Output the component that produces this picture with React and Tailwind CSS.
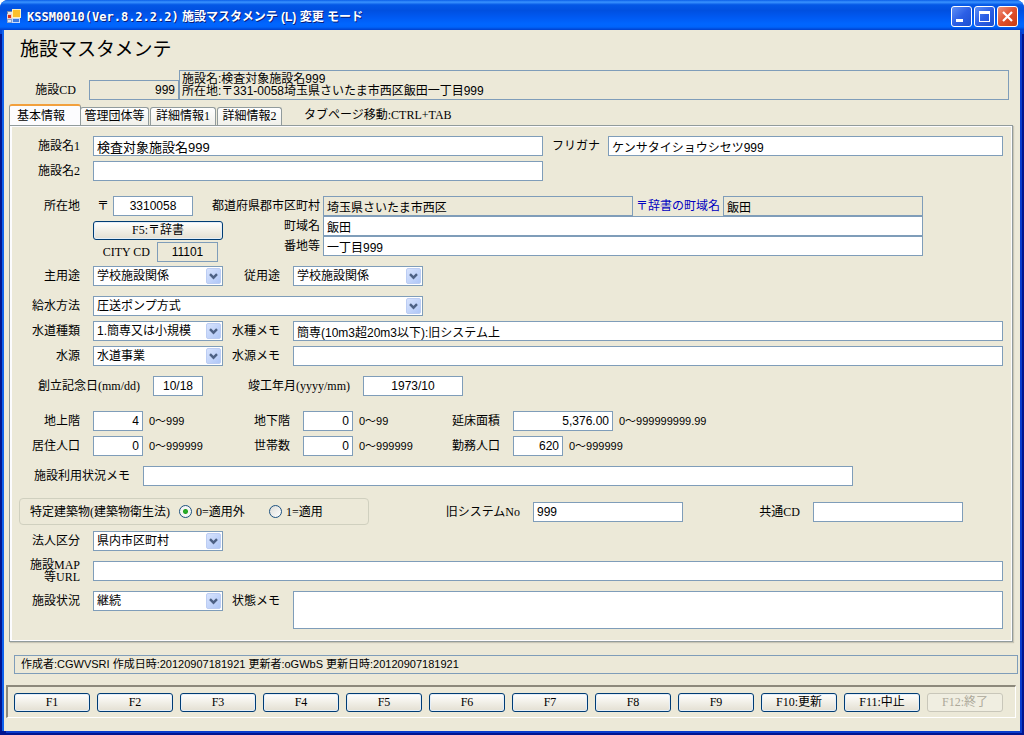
import { useState } from "react";

const SANS = "font-['Liberation_Sans','Noto_Sans_CJK_JP',sans-serif]";
const SERIF = "font-['Liberation_Serif','Noto_Sans_CJK_JP',serif]";
const BOX = "block h-5 shrink-0 border border-[#7f9db9] px-[3px] leading-[18px] text-black outline-none " + SANS;

function Label({ id, width, gap = "pr-[13px]", children }) {
  return (
    <label
      htmlFor={id}
      className={`shrink-0 text-right text-xs leading-3 whitespace-nowrap ${SERIF} ${width} ${gap}`}
    >
      {children}
    </label>
  );
}

function TextBox({ id, width, value = "", readOnly = false, align = "text-left", size = "text-xs" }) {
  return (
    <input
      id={id}
      type="text"
      defaultValue={value}
      readOnly={readOnly}
      className={`${BOX} ${readOnly ? "bg-[#ece9d8]" : "bg-white"} ${size} ${align} ${width}`}
    />
  );
}

function SelectBox({ id, width, value }) {
  return (
    <span className={`relative block h-5 shrink-0 ${width}`}>
      <select id={id} defaultValue={value} className={`${BOX} w-full appearance-none bg-white text-xs`}>
        <option>{value}</option>
      </select>
      <svg
        viewBox="0 0 15 16"
        className="pointer-events-none absolute top-0.5 right-0.5 h-4 w-[15px]"
        aria-hidden="true"
      >
        <defs>
          <linearGradient id={`${id}-face`} x1="0" y1="0" x2="1" y2="1">
            <stop offset="0" stopColor="#d9e4fd" />
            <stop offset="1" stopColor="#aec6f7" />
          </linearGradient>
        </defs>
        <rect x="0.5" y="0.5" width="14" height="15" rx="1.5" fill={`url(#${id}-face)`} stroke="#bccdf3" />
        <path d="M4 6.2 L7.5 9.7 L11 6.2" fill="none" stroke="#4d6185" strokeWidth="2.4" />
      </svg>
    </span>
  );
}

function Hint({ width, children }) {
  return <span className={`shrink-0 pl-1.5 text-[11px] leading-5 ${SANS} ${width}`}>{children}</span>;
}

function Row({ top = "mt-[5px]", children }) {
  return <div className={`flex h-5 items-center ${top}`}>{children}</div>;
}

function PushButton({ width, disabled = false, children }) {
  return (
    <button
      type="button"
      disabled={disabled}
      className={`h-[19px] shrink-0 rounded-[3px] border text-xs leading-[17px] whitespace-nowrap ${SERIF} ${width} ${
        disabled
          ? "border-[#c9c7ba] bg-[#f0eee1] text-[#aca899]"
          : "border-[#003c74] bg-linear-to-b from-white via-[#f1efe7] to-[#e3dfd2] text-black shadow-[inset_0_0_0_1px_#e4eef8]"
      }`}
    >
      {children}
    </button>
  );
}

function Radio({ name, id, checked, children }) {
  return (
    <label htmlFor={id} className={`flex items-center gap-1 text-xs leading-5 whitespace-nowrap ${SERIF}`}>
      <input
        id={id}
        name={name}
        type="radio"
        defaultChecked={checked}
        className="size-[13px] shrink-0 appearance-none rounded-full border border-[#1c5180] bg-linear-to-br from-[#dcdcd7] to-white checked:bg-[radial-gradient(circle,#2fb52c_0,#21a121_2px,#f6f6f4_3px)]"
      />
      {children}
    </label>
  );
}

function TitleBar() {
  const glass =
    "flex size-[21px] items-center justify-center rounded-[3px] border border-white";
  return (
    <header className="flex h-[30px] items-center rounded-t-lg bg-[linear-gradient(180deg,#0a5ee8_0,#3a93ff_7%,#0458e6_16%,#0050e0_35%,#0058f0_55%,#0066ff_80%,#0064fb_90%,#0040cc_100%)] pr-1.5 pl-1.5">
      <svg viewBox="0 0 16 16" className="mt-0.5 size-4" aria-hidden="true">
        <rect x="1.5" y="3.5" width="5" height="3" fill="#e8e8e8" stroke="#7a8aa8" />
        <rect x="1.5" y="6.5" width="4" height="4" fill="#d8321e" stroke="#f0d0c8" />
        <rect x="6.5" y="1.5" width="8" height="8" fill="#fbc02d" stroke="#fff1c0" />
        <rect x="1.5" y="11.5" width="4" height="3" fill="#dfe6f2" stroke="#8fa3c8" />
        <rect x="6.5" y="10.5" width="7" height="4" fill="#3f7be0" stroke="#c7dafa" />
      </svg>
      <h1 className="mt-1 ml-[5px] text-xs leading-4 font-bold whitespace-nowrap text-white [text-shadow:1px_1px_0_#0a1f7a]">
        <span className="font-['DejaVu_Sans_Mono',monospace]">KSSM0010(Ver.8.2.2.2)</span>
        <span className={SANS}> 施設マスタメンテ (L) 変更 モード</span>
      </h1>
      <div className="mt-0.5 ml-auto flex gap-0.5">
        <button
          type="button"
          aria-label="最小化"
          className={`${glass} bg-linear-to-br from-[#5f8ff5] via-[#2c5fe6] to-[#1c4fd0]`}
        >
          <svg viewBox="0 0 19 19" className="size-[19px]" aria-hidden="true">
            <rect x="4" y="12" width="7" height="3" fill="#fff" />
          </svg>
        </button>
        <button
          type="button"
          aria-label="最大化"
          className={`${glass} bg-linear-to-br from-[#5f8ff5] via-[#2c5fe6] to-[#1c4fd0]`}
        >
          <svg viewBox="0 0 19 19" className="size-[19px]" aria-hidden="true">
            <path d="M4 4h11v11H4z M5 7v7h9V7z" fill="#fff" fillRule="evenodd" />
          </svg>
        </button>
        <button
          type="button"
          aria-label="閉じる"
          className={`${glass} bg-linear-to-br from-[#ee9078] via-[#e0502c] to-[#c83c10]`}
        >
          <svg viewBox="0 0 19 19" className="size-[19px]" aria-hidden="true">
            <path d="M5 5l9 9M14 5l-9 9" stroke="#fff" strokeWidth="2.2" />
          </svg>
        </button>
      </div>
    </header>
  );
}

const TABS = [
  { name: "基本情報", width: "w-[72px]" },
  { name: "管理団体等", width: "w-[69px]" },
  { name: "詳細情報1", width: "w-[66px]" },
  { name: "詳細情報2", width: "w-[65px]" },
];

function TabStrip() {
  const [active, setActive] = useState(0);
  return (
    <div className="mt-1 flex h-[21px] items-end pl-[5px]">
      <div role="tablist" className="flex items-end gap-px">
        {TABS.map((tab, i) => (
          <button
            key={tab.name}
            type="button"
            role="tab"
            aria-selected={i === active}
            onClick={() => setActive(i)}
            className={`rounded-t-[3px] border-x border-t text-xs whitespace-nowrap ${SERIF} ${tab.width} ${
              i === active
                ? "-mr-0.5 h-[21px] border-x-[#919b9c] border-t-2 border-t-[#f2a03c] bg-[#fcfcfe] pr-2 leading-[18px]"
                : "h-[18px] border-[#919b9c] bg-linear-to-b from-white to-[#f0f0ea] leading-[17px]"
            }`}
          >
            {tab.name}
          </button>
        ))}
      </div>
      <span className={`ml-[22px] self-center text-xs leading-4 ${SERIF}`}>タブページ移動:CTRL+TAB</span>
    </div>
  );
}

function Address() {
  return (
    <div className="mt-[15px] flex items-start">
      <div className="flex h-5 items-center">
        <Label id="zip" width="w-[83px]">所在地</Label>
      </div>
      <div className="w-[130px] shrink-0">
        <div className="flex h-5 items-center">
          <span className={`w-5 shrink-0 pl-1 text-xs leading-5 ${SERIF}`}>〒</span>
          <TextBox id="zip" width="w-20" value="3310058" align="text-center" />
        </div>
        <div className="mt-[5px] flex">
          <PushButton width="w-[130px]">F5:〒辞書</PushButton>
        </div>
        <div className="mt-0.5 flex h-5 items-center">
          <Label id="city" width="w-16" gap="pr-[7px]">CITY CD</Label>
          <TextBox id="city" width="w-[61px]" value="11101" readOnly align="text-center" />
        </div>
      </div>
      <div className="w-[700px] shrink-0">
        <div className="flex h-5 items-center">
          <Label id="pref" width="w-[100px]" gap="pr-[3px]">
            <span className="flex justify-end">都道府県郡市区町村</span>
          </Label>
          <TextBox id="pref" width="w-[310px]" value="埼玉県さいたま市西区" readOnly />
          <label htmlFor="dict" className={`flex-1 text-center text-xs leading-5 text-[#0000c0] ${SERIF}`}>
            〒辞書の町域名
          </label>
          <TextBox id="dict" width="w-[200px]" value="飯田" readOnly />
        </div>
        <div className="flex h-5 items-center">
          <Label id="town" width="w-[100px]" gap="pr-[3px]">町域名</Label>
          <TextBox id="town" width="w-[600px]" value="飯田" />
        </div>
        <div className="flex h-5 items-center">
          <Label id="block" width="w-[100px]" gap="pr-[3px]">番地等</Label>
          <TextBox id="block" width="w-[600px]" value="一丁目999" />
        </div>
      </div>
    </div>
  );
}

function BasicForm() {
  return (
    <section className="mr-[7px] ml-[5px] border border-[#919b9c] pt-2.5 pr-[9px] pb-3 shadow-[inset_2px_1px_0_#fcfcfe,inset_-1px_-1px_0_#fcfcfe,1px_1px_1px_#c9c6b6]">
      <Row top="mt-0">
        <Label id="name1" width="w-[83px]">施設名1</Label>
        <TextBox id="name1" width="w-[450px]" size="text-[13px]" value="検査対象施設名999" />
        <Label id="kana" width="w-[65px]" gap="pr-2">フリガナ</Label>
        <TextBox id="kana" width="min-w-0 flex-1" value="ケンサタイショウシセツ999" />
      </Row>
      <Row>
        <Label id="name2" width="w-[83px]">施設名2</Label>
        <TextBox id="name2" width="w-[450px]" />
      </Row>

      <Address />

      <Row top="mt-1">
        <Label id="use1" width="w-[83px]">主用途</Label>
        <SelectBox id="use1" width="w-[130px]" value="学校施設関係" />
        <Label id="use2" width="w-[70px]">従用途</Label>
        <SelectBox id="use2" width="w-[130px]" value="学校施設関係" />
      </Row>
      <Row top="mt-2.5">
        <Label id="supply" width="w-[83px]">給水方法</Label>
        <SelectBox id="supply" width="w-[330px]" value="圧送ポンプ方式" />
      </Row>
      <Row>
        <Label id="kind" width="w-[83px]">水道種類</Label>
        <SelectBox id="kind" width="w-[130px]" value="1.簡専又は小規模" />
        <Label id="kindMemo" width="w-[70px]">水種メモ</Label>
        <TextBox id="kindMemo" width="min-w-0 flex-1" value="簡専(10m3超20m3以下):旧システム上" />
      </Row>
      <Row>
        <Label id="source" width="w-[83px]">水源</Label>
        <SelectBox id="source" width="w-[130px]" value="水道事業" />
        <Label id="sourceMemo" width="w-[70px]">水源メモ</Label>
        <TextBox id="sourceMemo" width="min-w-0 flex-1" />
      </Row>
      <Row top="mt-2.5">
        <Label id="founded" width="w-[143px]">創立記念日(mm/dd)</Label>
        <TextBox id="founded" width="w-[50px]" value="10/18" align="text-center" />
        <Label id="built" width="w-40">竣工年月(yyyy/mm)</Label>
        <TextBox id="built" width="w-[100px]" value="1973/10" align="text-center" />
      </Row>
      <Row top="mt-[15px]">
        <Label id="above" width="w-[83px]">地上階</Label>
        <TextBox id="above" width="w-[50px]" value="4" align="text-right" />
        <Hint width="w-20">0～999</Hint>
        <Label id="below" width="w-20">地下階</Label>
        <TextBox id="below" width="w-[50px]" value="0" align="text-right" />
        <Hint width="w-20">0～99</Hint>
        <Label id="area" width="w-20">延床面積</Label>
        <TextBox id="area" width="w-[100px]" value="5,376.00" align="text-right" />
        <Hint width="w-auto">0～999999999.99</Hint>
      </Row>
      <Row>
        <Label id="residents" width="w-[83px]">居住人口</Label>
        <TextBox id="residents" width="w-[50px]" value="0" align="text-right" />
        <Hint width="w-20">0～999999</Hint>
        <Label id="homes" width="w-20">世帯数</Label>
        <TextBox id="homes" width="w-[50px]" value="0" align="text-right" />
        <Hint width="w-20">0～999999</Hint>
        <Label id="workers" width="w-20">勤務人口</Label>
        <TextBox id="workers" width="w-[50px]" value="620" align="text-right" />
        <Hint width="w-auto">0～999999</Hint>
      </Row>
      <Row top="mt-2.5">
        <Label id="usage" width="w-[133px]">施設利用状況メモ</Label>
        <TextBox id="usage" width="w-[710px]" />
      </Row>
      <div className="mt-3 flex items-center">
        <fieldset
          aria-label="特定建築物(建築物衛生法)"
          className="ml-[9px] flex h-[27px] w-[350px] shrink-0 items-center rounded-[4px] border border-[#d0d0bf] pl-2.5"
        >
          <span className={`w-[149px] shrink-0 text-xs leading-5 whitespace-nowrap ${SERIF}`}>
            特定建築物(建築物衛生法)
          </span>
          <span className="w-[90px] shrink-0">
            <Radio id="law0" name="law" checked>0=適用外</Radio>
          </span>
          <Radio id="law1" name="law">1=適用</Radio>
        </fieldset>
        <Label id="oldNo" width="w-[164px]">旧システムNo</Label>
        <TextBox id="oldNo" width="w-[150px]" value="999" />
        <Label id="common" width="w-[130px]">共通CD</Label>
        <TextBox id="common" width="w-[150px]" />
      </div>
      <Row top="mt-1.5">
        <Label id="corp" width="w-[83px]">法人区分</Label>
        <SelectBox id="corp" width="w-[130px]" value="県内市区町村" />
      </Row>
      <Row top="mt-2.5">
        <Label id="url" width="w-[83px]">
          施設MAP
          <br />
          等URL
        </Label>
        <TextBox id="url" width="min-w-0 flex-1" />
      </Row>
      <div className="mt-2.5 flex items-start">
        <div className="flex h-5 items-center">
          <Label id="status" width="w-[83px]">施設状況</Label>
          <SelectBox id="status" width="w-[130px]" value="継続" />
          <Label id="statusMemo" width="w-[70px]">状態メモ</Label>
        </div>
        <textarea
          id="statusMemo"
          className={`block h-[38px] min-w-0 flex-1 resize-none border border-[#7f9db9] bg-white px-[3px] text-xs outline-none ${SANS}`}
        />
      </div>
    </section>
  );
}

const KEYS = ["F1", "F2", "F3", "F4", "F5", "F6", "F7", "F8", "F9", "F10:更新", "F11:中止", "F12:終了"];

export default function App() {
  return (
    <div className="flex min-h-screen flex-col rounded-t-lg bg-[#0347d8] text-black">
      <TitleBar />
      <main className="mr-1 mb-1 ml-1 flex-1 bg-[#ece9d8] shadow-[-2px_0_0_#0f62ee,2px_2px_0_#0a3ccc,4px_4px_0_#001590,-4px_4px_0_#001590]">
        <h2 className={`pl-4 text-[19px] leading-10 ${SERIF}`}>施設マスタメンテ</h2>
        <div className="flex items-end pr-[11px]">
          <div className="flex h-5 items-center">
            <Label id="code" width="w-[85px]">施設CD</Label>
            <TextBox id="code" width="w-[90px]" value="999" readOnly align="text-right" />
          </div>
          <div className={`h-[30px] flex-1 border border-[#7f9db9] px-0.5 pt-0.5 text-xs leading-3 ${SANS}`}>
            <p>施設名:検査対象施設名999</p>
            <p>所在地:〒331-0058埼玉県さいたま市西区飯田一丁目999</p>
          </div>
        </div>
        <TabStrip />
        <BasicForm />
        <p
          className={`mt-[13px] mr-0.5 ml-2.5 h-[19px] border border-[#7f9db9] pl-1.5 text-[11px] leading-[17px] ${SANS}`}
        >
          作成者:CGWVSRI 作成日時:20120907181921 更新者:oGWbS 更新日時:20120907181921
        </p>
        <div className="mt-[11px] mr-1 ml-0.5 flex h-[33px] items-center gap-[7px] border border-t-2 border-l-2 border-t-[#8c897b] border-r-white border-b-white border-l-[#8c897b] pl-1.5">
          {KEYS.map((key) => (
            <PushButton key={key} width="w-[76px]" disabled={key.startsWith("F12")}>
              {key}
            </PushButton>
          ))}
        </div>
      </main>
    </div>
  );
}
